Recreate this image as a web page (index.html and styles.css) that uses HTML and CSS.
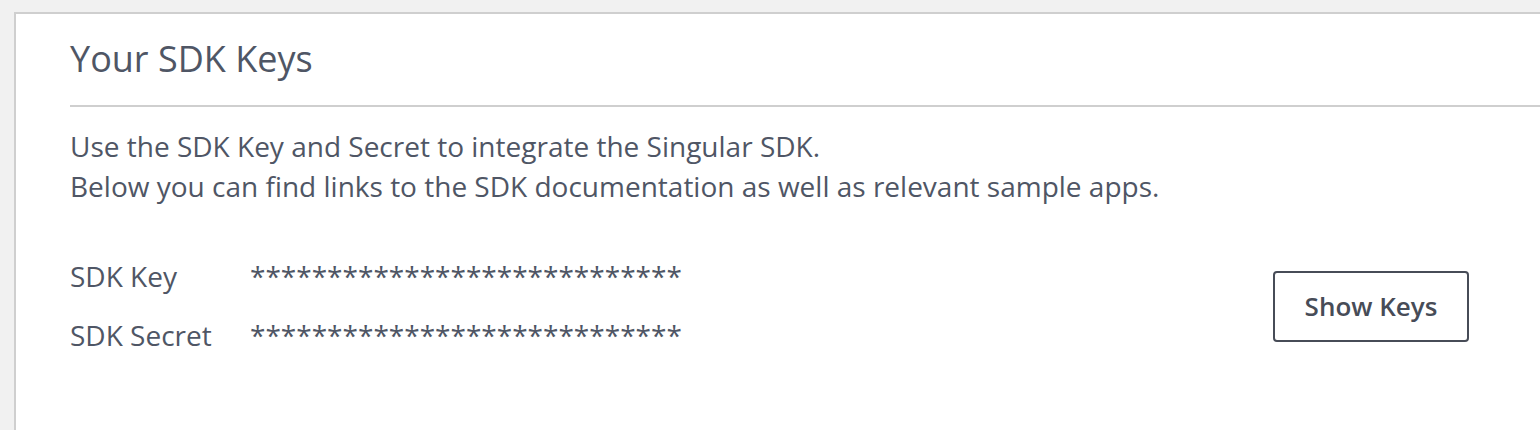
FILE: index.html
```html
<!DOCTYPE html>
<html lang="en">
<head>
    <meta charset="UTF-8">
    <meta name="viewport" content="width=device-width, initial-scale=1.0">
    <title>Your SDK Keys</title>
    <link rel="stylesheet" href="styles.css">
</head>
<body>
    <div class="card">
        <h1>Your SDK Keys</h1>
        <div class="intro">
            <p>Use the SDK Key and Secret to integrate the Singular SDK.</p>
            <p>Below you can find links to the SDK documentation as well as relevant sample apps.</p>
        </div>
        <div class="keys">
            <div class="key-list">
                <div class="key-row">
                    <span class="key-label">SDK Key</span>
                    <span class="key-value">****************************</span>
                </div>
                <div class="key-row">
                    <span class="key-label">SDK Secret</span>
                    <span class="key-value">****************************</span>
                </div>
            </div>
            <button type="button">Show Keys</button>
        </div>
    </div>
</body>
</html>
```

FILE: styles.css
```css
body {
    margin: 0;
    padding: 12px 0 0 14px;
    background-color: #f1f1f1;
    font-family: "Open Sans", sans-serif;
    color: #4f5665;
    overflow: hidden;
}
.card {
    background-color: #fff;
    border-top: 2px solid #cfcfcf;
    border-left: 2px solid #cfcfcf;
    padding: 0 0 40px 54px;
    height: 420px;
    box-sizing: border-box;
}
h1 {
    margin: 0;
    padding: 20px 0 22px;
    font-size: 36px;
    font-weight: 400;
    line-height: 49px;
    border-bottom: 2px solid #cfcfcf;
}
.intro {
    margin-top: 19px;
}
.intro p {
    margin: 0;
    font-size: 28px;
    line-height: 40px;
}
.keys {
    display: flex;
    align-items: center;
    justify-content: space-between;
    padding-right: 71px;
    margin-top: 41px;
}
.key-row {
    display: flex;
    font-size: 28px;
    line-height: 59px;
}
.key-label {
    width: 180px;
}
button {
    width: 196px;
    height: 71px;
    font-family: "Open Sans", sans-serif;
    font-size: 26px;
    font-weight: 600;
    color: #474c57;
    background-color: #fff;
    border: 2px solid #474c57;
    border-radius: 4px;
    cursor: pointer;
}
```
